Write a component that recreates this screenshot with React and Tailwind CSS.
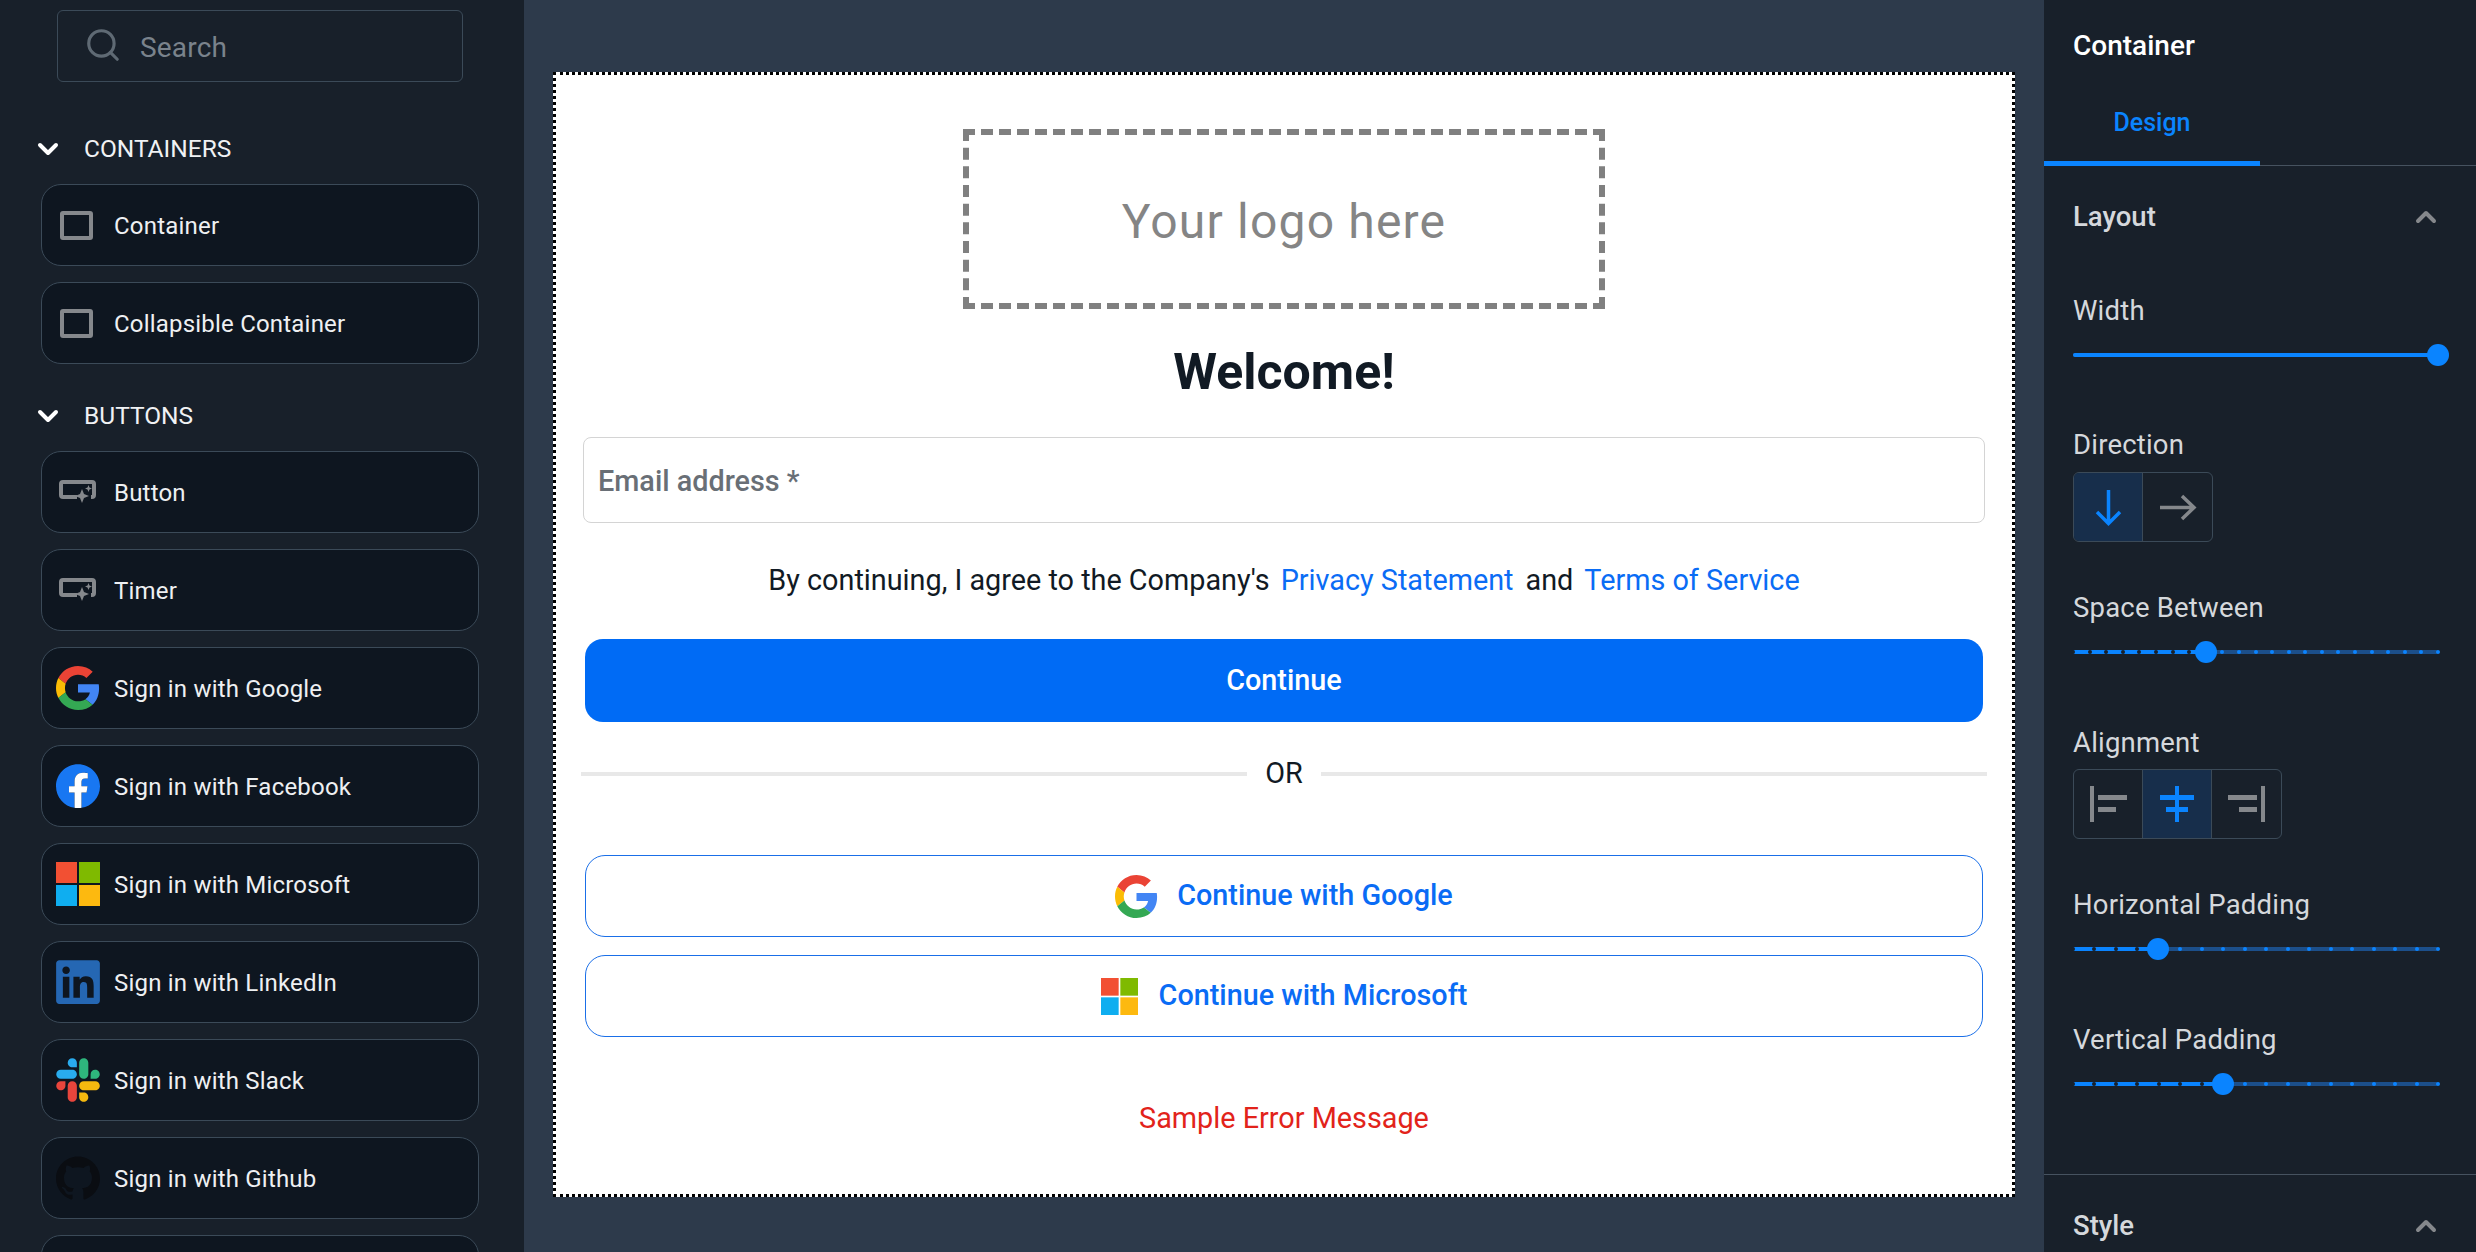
import { Search, ChevronDown, ChevronUp } from 'lucide-react'
import { FaLinkedin } from 'react-icons/fa'
import { SiGithub, SiTiktok } from 'react-icons/si'

const GoogleIcon = ({ size = 44 }) => (
  <svg width={size} height={size} viewBox="0 0 48 48">
    <path fill="#EA4335" d="M24 9.5c3.54 0 6.71 1.22 9.21 3.6l6.85-6.85C35.9 2.38 30.47 0 24 0 14.62 0 6.51 5.38 2.56 13.22l7.98 6.19C12.43 13.72 17.74 9.5 24 9.5z" />
    <path fill="#4285F4" d="M46.98 24.55c0-1.57-.15-3.09-.38-4.55H24v9.02h12.94c-.58 2.96-2.26 5.48-4.78 7.18l7.73 6c4.51-4.18 7.09-10.36 7.09-17.65z" />
    <path fill="#FBBC05" d="M10.53 28.59c-.48-1.45-.76-2.99-.76-4.59s.27-3.14.76-4.59l-7.98-6.19C.92 16.46 0 20.12 0 24c0 3.88.92 7.54 2.56 10.78l7.97-6.19z" />
    <path fill="#34A853" d="M24 48c6.48 0 11.93-2.13 15.89-5.81l-7.73-6c-2.15 1.45-4.92 2.3-8.16 2.3-6.26 0-11.57-4.22-13.47-9.91l-7.98 6.19C6.51 42.62 14.62 48 24 48z" />
  </svg>
)

const FacebookIcon = () => (
  <svg width="44" height="44" viewBox="0 0 24 24">
    <path fill="#1877F2" d="M24 12.073c0-6.627-5.373-12-12-12s-12 5.373-12 12c0 5.99 4.388 10.954 10.125 11.854v-8.385H7.078v-3.47h3.047V9.43c0-3.007 1.792-4.669 4.533-4.669 1.312 0 2.686.235 2.686.235v2.953H15.83c-1.491 0-1.956.925-1.956 1.874v2.25h3.328l-.532 3.47h-2.796v8.385C19.612 23.027 24 18.062 24 12.073z" />
    <path fill="#fff" d="M16.671 15.542l.532-3.469h-3.328v-2.25c0-.949.465-1.874 1.956-1.874h1.513V4.996s-1.374-.235-2.686-.235c-2.741 0-4.533 1.662-4.533 4.669v2.643H7.078v3.47h3.047v8.385a12.09 12.09 0 003.75 0v-8.386h2.796z" />
  </svg>
)

const MicrosoftIcon = ({ size = 44 }) => (
  <svg width={size} height={size} viewBox="0 0 44 44">
    <rect x="0" y="0" width="21" height="21" fill="#F25033" />
    <rect x="23" y="0" width="21" height="21" fill="#7FBA00" />
    <rect x="0" y="23" width="21" height="21" fill="#0FAEF0" />
    <rect x="23" y="23" width="21" height="21" fill="#FDB90F" />
  </svg>
)

const SlackIcon = () => (
  <svg width="44" height="44" viewBox="0 0 127 127">
    <path fill="#E8453C" d="M27.2 80c0 7.3-5.9 13.2-13.2 13.2C6.7 93.2.8 87.3.8 80c0-7.3 5.9-13.2 13.2-13.2h13.2V80zm6.6 0c0-7.3 5.9-13.2 13.2-13.2 7.3 0 13.2 5.9 13.2 13.2v33c0 7.3-5.9 13.2-13.2 13.2-7.3 0-13.2-5.9-13.2-13.2V80z" />
    <path fill="#29ACEE" d="M47 27c-7.3 0-13.2-5.9-13.2-13.2C33.8 6.5 39.7.6 47 .6c7.3 0 13.2 5.9 13.2 13.2V27H47zm0 6.7c7.3 0 13.2 5.9 13.2 13.2 0 7.3-5.9 13.2-13.2 13.2H13.9C6.6 60.1.7 54.2.7 46.9c0-7.3 5.9-13.2 13.2-13.2H47z" />
    <path fill="#2EB67D" d="M99.9 46.9c0-7.3 5.9-13.2 13.2-13.2 7.3 0 13.2 5.9 13.2 13.2 0 7.3-5.9 13.2-13.2 13.2H99.9V46.9zm-6.6 0c0 7.3-5.9 13.2-13.2 13.2-7.3 0-13.2-5.9-13.2-13.2V13.8C66.9 6.5 72.8.6 80.1.6c7.3 0 13.2 5.9 13.2 13.2v33.1z" />
    <path fill="#F5B90F" d="M80.1 99.8c7.3 0 13.2 5.9 13.2 13.2 0 7.3-5.9 13.2-13.2 13.2-7.3 0-13.2-5.9-13.2-13.2V99.8h13.2zm0-6.6c-7.3 0-13.2-5.9-13.2-13.2 0-7.3 5.9-13.2 13.2-13.2h33.1c7.3 0 13.2 5.9 13.2 13.2 0 7.3-5.9 13.2-13.2 13.2H80.1z" />
  </svg>
)

const SquareIcon = () => (
  <span className="block w-[33px] h-[29px] mr-[3px] rounded-[3px] border-[4px] border-[#85888c]" />
)

const ButtonIcon = () => (
  <svg width="44" height="26" viewBox="0 0 44 26" fill="none">
    <path d="M21 18H7a2 2 0 0 1-2-2V5a2 2 0 0 1 2-2h29a2 2 0 0 1 2 2v11a2 2 0 0 1-2 2h-1" stroke="#85888c" strokeWidth="4" />
    <path d="M26 10l2 5 5 2-5 2-2 5-2-5-5-2 5-2z" fill="#85888c" />
    <path d="M32.500 6l1 2.500 2.500 1-2.500 1-1 2.500-1-2.500-2.500-1 2.500-1z" fill="#85888c" />
  </svg>
)

const SECTIONS = [
  {
    title: 'CONTAINERS',
    items: [
      { label: 'Container', icon: <SquareIcon /> },
      { label: 'Collapsible Container', icon: <SquareIcon /> },
    ],
  },
  {
    title: 'BUTTONS',
    items: [
      { label: 'Button', icon: <ButtonIcon /> },
      { label: 'Timer', icon: <ButtonIcon /> },
      { label: 'Sign in with Google', icon: <GoogleIcon /> },
      { label: 'Sign in with Facebook', icon: <FacebookIcon /> },
      { label: 'Sign in with Microsoft', icon: <MicrosoftIcon /> },
      { label: 'Sign in with LinkedIn', icon: <FaLinkedin size={50} className="text-[#2567b3] -m-[3px]" /> },
      { label: 'Sign in with Slack', icon: <SlackIcon /> },
      { label: 'Sign in with Github', icon: <SiGithub size={44} className="text-[#0a0d12]" /> },
      // only the top of this one shows above the fold
      { label: '', icon: <SiTiktok size={44} className="text-black" /> },
    ],
  },
]

function Sidebar() {
  return (
    <aside className="w-[524px] shrink-0 h-full overflow-hidden bg-[#18202a] pt-[10px] font-['Roboto',sans-serif]">
      <div className="ml-[57px] w-[406px] h-[72px] rounded-[6px] border border-[#3b4a58] flex items-center pl-[26px] gap-[18px] text-[#7a838c]">
        <Search size={38} strokeWidth={2} className="text-[#5f6a74] -mt-[3px]" />
        <span className="text-[28px] pt-[3px] tracking-[0.2px]">Search</span>
      </div>

      {SECTIONS.map((section, i) => (
        <section key={section.title} className={i === 0 ? 'mt-[47px]' : 'mt-[32px]'}>
          <div className="flex items-center h-[40px] pl-[32px] text-white">
            <ChevronDown size={32} strokeWidth={3} />
            <span className="ml-[20px] text-[24.500px] text-[#f0f2f4]">{section.title}</span>
          </div>
          <div className="mt-[15px] ml-[41px] w-[438px] flex flex-col gap-[16px]">
            {section.items.map((item) => (
              <div
                key={item.label || 'last'}
                className="h-[82px] shrink-0 rounded-[20px] border border-[#3b4a58] bg-[#0e1620] flex items-center pl-[14px] text-[#eef0f2] text-[24px]"
              >
                <span className="w-[44px] flex items-center justify-center shrink-0">{item.icon}</span>
                <span className="ml-[14px] pt-[2px] tracking-[0.2px]">{item.label}</span>
              </div>
            ))}
          </div>
        </section>
      ))}
    </aside>
  )
}

function Canvas() {
  return (
    <main className="flex-1 h-full overflow-hidden bg-[#2d3a4b] pl-[29px] pt-[72px]">
      <div className="w-[1462px] h-[1125px] bg-white border-[3px] border-dotted border-black font-['Roboto',sans-serif] flex flex-col items-center">
        <div className="mt-[54px] w-[642px] h-[180px] shrink-0 border-[6px] border-dashed border-[#808080] flex items-center justify-center pt-[6px] text-[#858585] text-[48px] tracking-[1.200px]">
          Your logo here
        </div>
        <h1 className="mt-[33px] text-[50px] leading-[60px] font-bold text-[#111a24]">Welcome!</h1>
        <div className="mt-[35px] w-[1402px] h-[86px] shrink-0 rounded-[8px] border border-[#d4d4d4] flex items-center pl-[14px] pt-[3px] text-[28.800px] font-medium text-[#696f76]">
          Email address *
        </div>
        <div className="mt-[37px] h-[40px] pt-[2px] flex items-center text-[28.800px] text-[#111a24]">
          <span>By continuing, I agree to the Company's</span>
          <span className="ml-[11px] text-[#0a6cf5]">Privacy Statement</span>
          <span className="ml-[12px]">and</span>
          <span className="ml-[11px] text-[#0a6cf5]">Terms of Service</span>
        </div>
        <button className="mt-[39px] w-[1398px] h-[83px] shrink-0 rounded-[18px] bg-[#006bf5] text-white text-[28.800px] font-medium">
          Continue
        </button>
        <div className="mt-[32px] w-[1406px] h-[40px] flex items-center text-[28.800px] text-[#111a24]">
          <span className="flex-1 h-[4px] bg-[#e8e8e8]" />
          <span className="w-[74px] text-center">OR</span>
          <span className="flex-1 h-[4px] bg-[#e8e8e8]" />
        </div>
        <button className="mt-[61px] w-[1398px] h-[82px] shrink-0 rounded-[20px] border-[1.5px] border-[#1a6fe8] flex items-center justify-center gap-[19px] text-[#0a6cf5] text-[28.800px] font-medium">
          <GoogleIcon size={43} />
          Continue with Google
        </button>
        <button className="mt-[18px] w-[1398px] h-[82px] shrink-0 rounded-[20px] border-[1.5px] border-[#1a6fe8] flex items-center justify-center gap-[21px] text-[#0a6cf5] text-[28.800px] font-medium">
          <MicrosoftIcon size={37} />
          Continue with Microsoft
        </button>
        <div className="mt-[61px] text-[28.800px] leading-[40px] text-[#e2231a]">Sample Error Message</div>
      </div>
    </main>
  )
}

function Slider({ label, percent, steps, className }) {
  const ticks = steps ? Array.from({ length: steps + 1 }, (_, i) => (i / steps) * 100) : []
  return (
    <div className={className}>
      <div className="text-[27.500px] leading-[36px] text-[#d5d8dc] tracking-[0.2px]">{label}</div>
      <div className="mt-[24px] relative h-[4px] w-[365px] rounded-full bg-[#1c4f8a]">
        <div className="absolute left-0 top-0 h-full rounded-full bg-[#0a84ff]" style={{ width: `${percent}%` }} />
        {ticks.map((t) => (
          <span
            key={t}
            className={
              t < percent
                ? 'absolute top-0 w-[4px] h-[4px] -ml-[2px] rounded-full bg-[#18202a]'
                : 'absolute top-0 w-[4px] h-[4px] -ml-[2px] rounded-full bg-[#0a84ff]'
            }
            style={{ left: `${t}%` }}
          />
        ))}
        <span
          className="absolute top-1/2 w-[22px] h-[22px] -ml-[11px] -mt-[11px] rounded-full bg-[#0a84ff]"
          style={{ left: `${percent}%` }}
        />
      </div>
    </div>
  )
}

const ArrowDown = ({ color }) => (
  <svg width="27" height="37" viewBox="0 0 27 37" fill="none" stroke={color} strokeWidth="3.500">
    <path d="M13.500 1v33M2 23l11.500 11.500L25 23" />
  </svg>
)

const ArrowRight = ({ color }) => (
  <svg width="38" height="27" viewBox="0 0 38 27" fill="none" stroke={color} strokeWidth="3.500">
    <path d="M1 13.500h34M23 2l12 11.500L23 25" />
  </svg>
)

const AlignIcon = ({ mode, color }) => (
  <svg width="38" height="36" viewBox="0 0 38 36" fill={color}>
    {mode === 'left' && (
      <>
        <rect x="1" y="0" width="4" height="36" />
        <rect x="9" y="9" width="29" height="5" />
        <rect x="9" y="21" width="18" height="5" />
      </>
    )}
    {mode === 'center' && (
      <>
        <rect x="17" y="0" width="4" height="36" />
        <rect x="2" y="9" width="34" height="5" />
        <rect x="8" y="21" width="22" height="5" />
      </>
    )}
    {mode === 'right' && (
      <>
        <rect x="33" y="0" width="4" height="36" />
        <rect x="0" y="9" width="29" height="5" />
        <rect x="11" y="21" width="18" height="5" />
      </>
    )}
  </svg>
)

function Segment({ active, last, children }) {
  return (
    <div
      className={`w-[69px] h-[68px] flex items-center justify-center ${last ? '' : 'border-r border-[#3b4a58]'} ${active ? 'bg-[#172e4b]' : ''}`}
    >
      {children}
    </div>
  )
}

function Inspector() {
  return (
    <aside className="w-[432px] shrink-0 h-full overflow-hidden bg-[#18202a] font-['Roboto',sans-serif]">
      <div className="h-[166px] border-b border-[#46525f] relative">
        <div className="pt-[28px] pl-[29px] text-[28px] leading-[36px] font-medium text-white">Container</div>
        <div className="absolute left-0 -bottom-[1px] w-[216px] h-[5px] bg-[#0a84ff]" />
        <div className="absolute left-0 top-[105px] w-[216px] text-center text-[25px] leading-[36px] font-medium text-[#0a84ff]">Design</div>
      </div>

      <div className="px-[29px] pt-[33px] h-[1009px] border-b border-[#46525f]">
        <div className="flex items-center justify-between text-[27.500px] leading-[36px] font-medium text-[#d5d8dc]">
          Layout
          <ChevronUp size={32} strokeWidth={3} className="text-[#85888c] mr-[5px]" />
        </div>
        <Slider label="Width" percent={100} className="mt-[58px]" />

        <div className="mt-[70px] text-[27.500px] leading-[36px] text-[#d5d8dc] tracking-[0.2px]">Direction</div>
        <div className="mt-[9px] flex w-fit rounded-[6px] border border-[#3b4a58] overflow-hidden">
          <Segment active><ArrowDown color="#0a84ff" /></Segment>
          <Segment last><ArrowRight color="#85888c" /></Segment>
        </div>

        <Slider label="Space Between" percent={36.400} steps={22} className="mt-[48px]" />

        <div className="mt-[71px] text-[27.500px] leading-[36px] text-[#d5d8dc] tracking-[0.2px]">Alignment</div>
        <div className="mt-[8px] flex w-fit rounded-[6px] border border-[#3b4a58] overflow-hidden">
          <Segment><AlignIcon mode="left" color="#85888c" /></Segment>
          <Segment active><AlignIcon mode="center" color="#0a84ff" /></Segment>
          <Segment last><AlignIcon mode="right" color="#85888c" /></Segment>
        </div>

        <Slider label="Horizontal Padding" percent={23.300} steps={17} className="mt-[48px]" />
        <Slider label="Vertical Padding" percent={41.100} steps={17} className="mt-[71px]" />
      </div>

      <div className="px-[29px] mt-[33px] flex items-center justify-between text-[27.500px] leading-[36px] font-medium text-[#d5d8dc]">
        Style
        <ChevronUp size={32} strokeWidth={3} className="text-[#85888c] mr-[5px]" />
      </div>
    </aside>
  )
}

export default function App() {
  return (
    <div className="flex w-[2476px] h-[1252px] overflow-hidden">
      <Sidebar />
      <Canvas />
      <Inspector />
    </div>
  )
}
